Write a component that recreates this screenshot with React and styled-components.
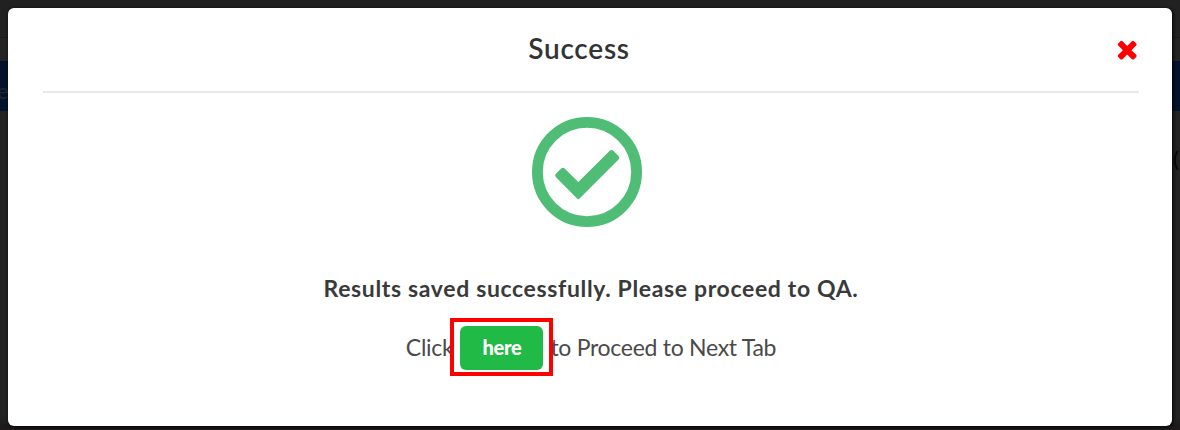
import React from "react";
import styled, { createGlobalStyle } from "styled-components";

const GlobalStyle = createGlobalStyle`
  *, *::before, *::after { box-sizing: border-box; }
  body { margin: 0; background: #212121; font-family: Lato, "Liberation Sans", sans-serif; }
`;

const Page = styled.div`
  position: relative;
  height: 430px;
  padding: 8px 8px 4px;
  overflow: hidden;
  background: linear-gradient(#212121 0 37px, #1b1b1b 37px 38px, #232323 38px 61px, #03132c 61px 111px, #222 111px 418px, #1c1a1b 426px);
`;

const Behind = styled.span`
  position: absolute;
  left: ${(p) => p.$x}px;
  top: ${(p) => p.$y}px;
  font-size: 22px;
  line-height: 26px;
  white-space: nowrap;
  color: ${(p) => p.$color};
`;

const Dialog = styled.section`
  position: relative;
  display: flex;
  flex-direction: column;
  height: 418px;
  padding: 0 33px 0 35px;
  border-radius: 6px;
  background: #fff;
  box-shadow: 1px 1px 3px 1px rgba(0, 0, 0, 0.6);
`;

const Header = styled.header`
  display: grid;
  grid-template-columns: 1fr auto 1fr;
  align-items: center;
  height: 85px;
  padding-bottom: 2px;
  border-bottom: 2px solid #e9e9e9;
`;

const Title = styled.h1`
  grid-column: 2;
  margin: 0 24px 1px 0;
  font-size: 28px;
  line-height: 34px;
  font-weight: 600;
  letter-spacing: 0.75px;
  color: #333;
`;

const CloseButton = styled.button`
  justify-self: end;
  display: flex;
  margin: 1px -2px 0 0;
  padding: 0;
  border: 0;
  background: none;
  color: #f00;
`;

const Body = styled.div`
  display: flex;
  flex-direction: column;
  align-items: center;
  padding-top: 24px;
`;

const StatusIcon = styled.svg`
  width: 110px;
  height: 110px;
  margin-right: 8px;
`;

const Message = styled.p`
  margin: 47px 0 0;
  font-size: 23px;
  line-height: 28px;
  font-weight: 700;
  letter-spacing: 0.65px;
  white-space: nowrap;
  color: #3a3a3a;
`;

const Prompt = styled.p`
  display: flex;
  align-items: center;
  margin: 16px 0 0;
  font-size: 23px;
  line-height: 28px;
  letter-spacing: -0.28px;
  white-space: nowrap;
  color: #4a4a4a;
`;

const Highlight = styled.span`
  position: relative;
  display: flex;
  margin: 0 -3px 0 -3px;
  padding: 4px 6px 2px;
  border: 4px solid #f00;
`;

const ActionButton = styled.button`
  width: 83px;
  height: 44px;
  padding: 0 0 2px;
  border: 0;
  border-radius: 6px;
  background: #22ba46;
  color: #fff;
  font: 900 20px/24px Lato, "Liberation Sans", sans-serif;
  letter-spacing: -0.3px;
`;

export default function App() {
  return (
    <>
      <GlobalStyle />
      <Page>
        <Behind $x={-3} $y={78} $color="#20262f">e</Behind>
        <Behind $x={1173} $y={146} $color="#050505">(</Behind>
        <Dialog role="dialog" aria-label="Success">
          <Header>
            <Title>Success</Title>
            <CloseButton aria-label="Close">
              <svg width="28.4" height="28.4" viewBox="0 0 1792 1792" fill="currentColor">
                <path d="M1490 1322q0 40-28 68l-136 136q-28 28-68 28t-68-28l-294-294-294 294q-28 28-68 28t-68-28l-136-136q-28-28-28-68t28-68l294-294-294-294q-28-28-28-68t28-68l136-136q28-28 68-28t68 28l294 294 294-294q28-28 68-28t68 28l136 136q28 28 28 68t-28 68l-294 294 294 294q28 28 28 68z" />
              </svg>
            </CloseButton>
          </Header>
          <Body>
            <StatusIcon viewBox="0 0 110 110">
              <circle cx="55" cy="55" r="49.6" fill="none" stroke="#4fbd75" strokeWidth="10.8" />
              <path
                d="M24.2 60.4Q22.2 58.4 24.2 56.4L28.9 51.7Q30.9 49.7 32.9 51.7L46.3 65.1L77.5 33.9Q79.5 31.9 81.5 33.9L86.3 38.7Q88.3 40.7 86.3 42.7L47.3 81.7Q46.3 82.7 45.3 81.7Z"
                fill="#4fbd75"
              />
            </StatusIcon>
            <Message>Results saved successfully. Please proceed to QA.</Message>
            <Prompt>
              <span>Click</span>
              <Highlight>
                <ActionButton>here</ActionButton>
              </Highlight>
              <span>to Proceed to Next Tab</span>
            </Prompt>
          </Body>
        </Dialog>
      </Page>
    </>
  );
}
